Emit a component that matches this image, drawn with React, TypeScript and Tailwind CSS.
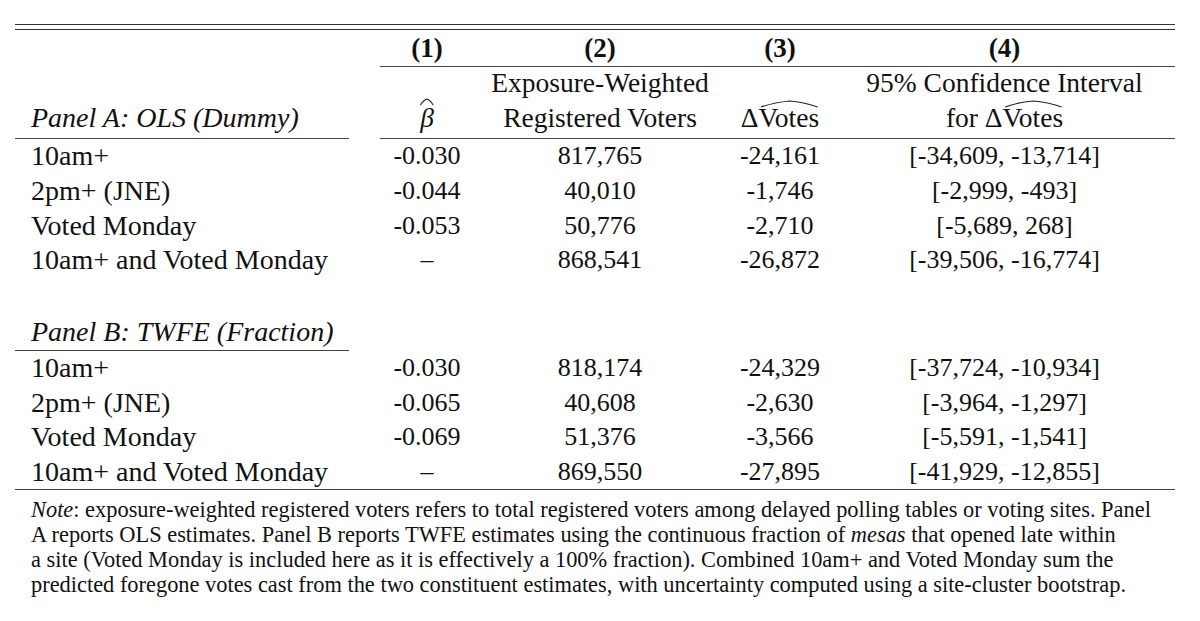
const serif = { fontFamily: '"Liberation Serif", "DejaVu Serif", serif' };

type Row = { label: string; beta: string; voters: string; votes: string; ci: string };

const panelA: Row[] = [
  { label: "10am+", beta: "-0.030", voters: "817,765", votes: "-24,161", ci: "[-34,609, -13,714]" },
  { label: "2pm+ (JNE)", beta: "-0.044", voters: "40,010", votes: "-1,746", ci: "[-2,999, -493]" },
  { label: "Voted Monday", beta: "-0.053", voters: "50,776", votes: "-2,710", ci: "[-5,689, 268]" },
  { label: "10am+ and Voted Monday", beta: "–", voters: "868,541", votes: "-26,872", ci: "[-39,506, -16,774]" },
];

const panelB: Row[] = [
  { label: "10am+", beta: "-0.030", voters: "818,174", votes: "-24,329", ci: "[-37,724, -10,934]" },
  { label: "2pm+ (JNE)", beta: "-0.065", voters: "40,608", votes: "-2,630", ci: "[-3,964, -1,297]" },
  { label: "Voted Monday", beta: "-0.069", voters: "51,376", votes: "-3,566", ci: "[-5,591, -1,541]" },
  { label: "10am+ and Voted Monday", beta: "–", voters: "869,550", votes: "-27,895", ci: "[-41,929, -12,855]" },
];

const cols = "grid grid-cols-[365px_94px_252px_108px_1fr]";

// text with a wide hat drawn over it
function Hat({ children, top = "-top-[4px]" }: { children: React.ReactNode; top?: string }) {
  return (
    <span className="relative inline-block">
      <svg className={`absolute left-0 ${top} w-full h-[8px]`} viewBox="0 0 60 8" preserveAspectRatio="none">
        <path d="M2 7 Q16 2 30 1 Q44 2 58 7" stroke="#222" strokeWidth="1.2" fill="none" vectorEffect="non-scaling-stroke" />
      </svg>
      {children}
    </span>
  );
}

function DataRow({ r }: { r: Row }) {
  return (
    <div className={`${cols} h-[34.7px] items-center`}>
      <div className="pl-[16px] text-[28px]">{r.label}</div>
      <div className="text-center">{r.beta}</div>
      <div className="text-center">{r.voters}</div>
      <div className="text-center">{r.votes}</div>
      <div className="text-center">{r.ci}</div>
    </div>
  );
}

export default function App() {
  return (
    <div className="w-[1200px] h-[621px] bg-white text-[#111]" style={serif}>
      <div className="w-[1160px] ml-[15px] pt-[24px] text-[26px] leading-none">
        {/* double top rule */}
        <div className="h-[1.3px] bg-[#333]" />
        <div className="h-[1.3px] bg-[#333] mt-[3.7px]" />

        {/* column numbers */}
        <div className={`${cols} h-[35.5px] items-center font-bold text-[27px]`}>
          <div />
          <div className="text-center">(1)</div>
          <div className="text-center">(2)</div>
          <div className="text-center">(3)</div>
          <div className="text-center">(4)</div>
        </div>
        <div className={cols}>
          <div />
          <div className="col-span-4 h-px bg-[#444]" />
        </div>

        <div className={`${cols} h-[35px] items-center pb-[3px] text-[27.5px]`}>
          <div />
          <div />
          <div className="text-center">Exposure-Weighted</div>
          <div />
          <div className="text-center">95% Confidence Interval</div>
        </div>
        <div className={`${cols} h-[35px] items-center pb-[3px] text-[27.5px]`}>
          <div className="pl-[16px] italic text-[28px]">Panel A: OLS (Dummy)</div>
          <div className="text-center italic">
            <Hat top="-top-[6px]">β</Hat>
          </div>
          <div className="text-center">Registered Voters</div>
          <div className="text-center">
            Δ<Hat>Votes</Hat>
          </div>
          <div className="text-center">
            for Δ<Hat>Votes</Hat>
          </div>
        </div>
        <div className={`${cols} mt-[1px]`}>
          <div className="h-px bg-[#444] mr-[31px]" />
          <div className="col-span-4 h-px bg-[#444]" />
        </div>

        {panelA.map((r) => (
          <DataRow key={"a" + r.label} r={r} />
        ))}

        <div className="h-[36px]" />

        <div className={`${cols} h-[36px] items-center`}>
          <div className="pl-[16px] italic text-[28px]">Panel B: TWFE (Fraction)</div>
        </div>
        <div className={cols}>
          <div className="h-px bg-[#444] mr-[31px]" />
        </div>

        {panelB.map((r) => (
          <DataRow key={"b" + r.label} r={r} />
        ))}

        <div className="h-px bg-[#444]" />

        <p className="pl-[16px] pt-[7px] text-[22.4px] leading-[25px] whitespace-nowrap">
          <i>Note</i>: exposure-weighted registered voters refers to total registered voters among delayed polling tables or voting sites. Panel
          <br />
          A reports OLS estimates. Panel B reports TWFE estimates using the continuous fraction of <i>mesas</i> that opened late within
          <br />
          a site (Voted Monday is included here as it is effectively a 100% fraction). Combined 10am+ and Voted Monday sum the
          <br />
          predicted foregone votes cast from the two constituent estimates, with uncertainty computed using a site-cluster bootstrap.
        </p>
      </div>
    </div>
  );
}
